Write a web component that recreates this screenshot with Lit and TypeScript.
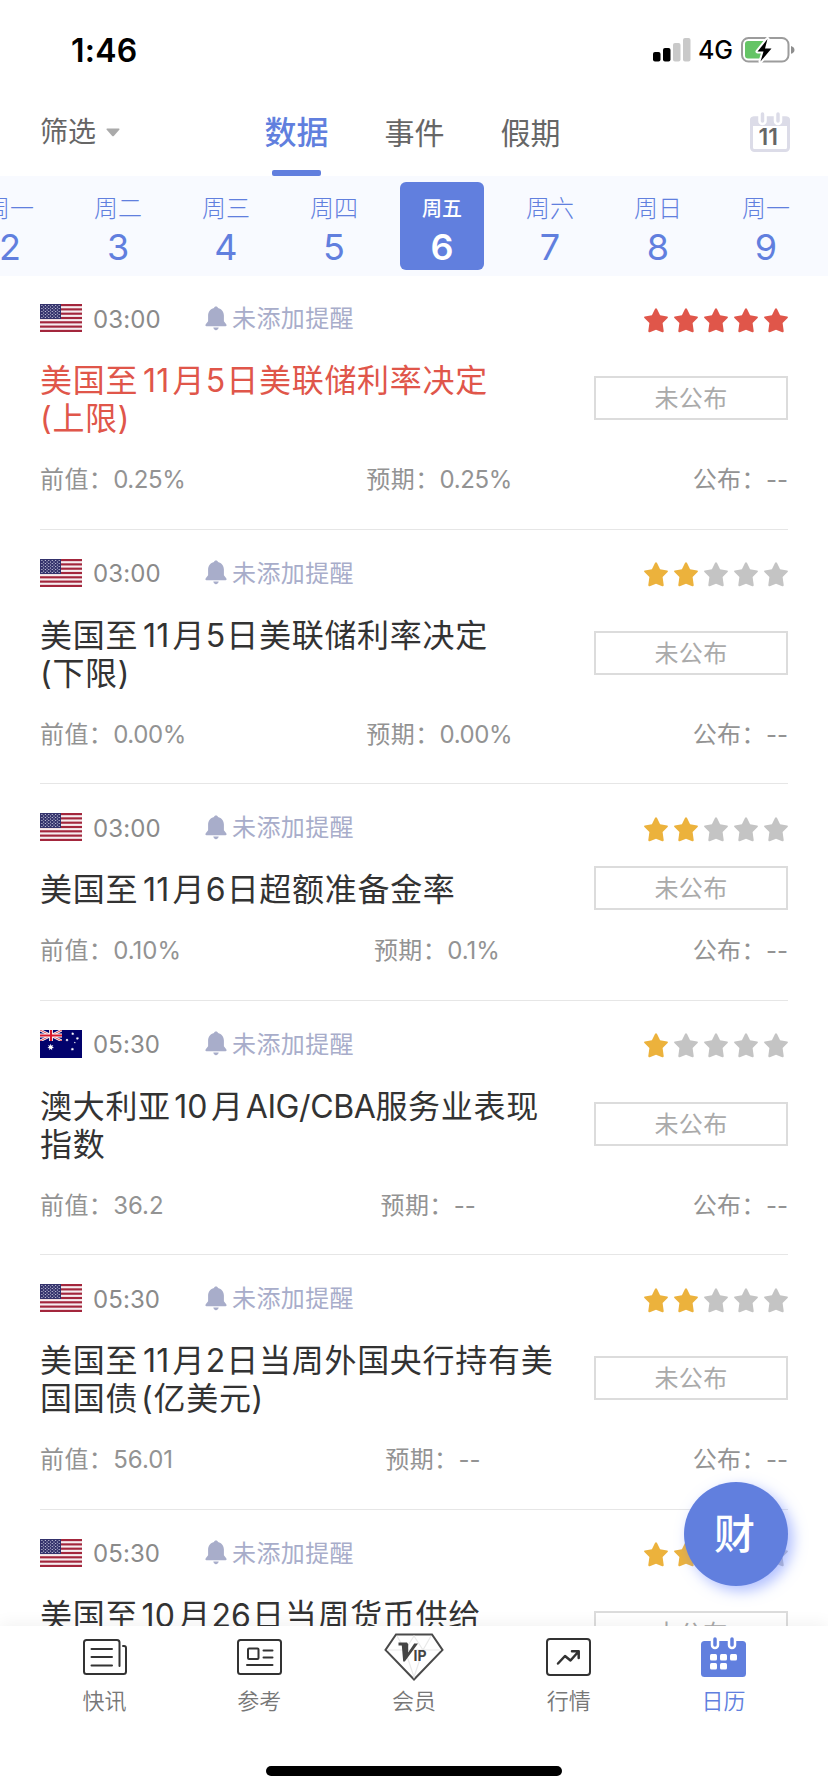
import { LitElement, html, css, svg } from "lit";
import { customElement, property } from "lit/decorators.js";
import { classMap } from "lit/directives/class-map.js";

interface CalendarEvent {
  country: "us" | "au";
  time: string;
  level: number;
  lines: string[];
  tall?: boolean;
  previous: string;
  forecast: string;
  actual: string;
}

const EVENTS: CalendarEvent[] = [
  { country: "us", time: "03:00", level: 5, lines: ["美国至11月5日美联储利率决定", "(上限)"], previous: "0.25%", forecast: "0.25%", actual: "--" },
  { country: "us", time: "03:00", level: 2, lines: ["美国至11月5日美联储利率决定", "(下限)"], previous: "0.00%", forecast: "0.00%", actual: "--" },
  { country: "us", time: "03:00", level: 2, lines: ["美国至11月6日超额准备金率"], previous: "0.10%", forecast: "0.1%", actual: "--" },
  { country: "au", time: "05:30", level: 1, lines: ["澳大利亚10月AIG/CBA服务业表现", "指数"], previous: "36.2", forecast: "--", actual: "--" },
  { country: "us", time: "05:30", level: 2, lines: ["美国至11月2日当周外国央行持有美", "国国债(亿美元)"], previous: "56.01", forecast: "--", actual: "--" },
  { country: "us", time: "05:30", level: 2, lines: ["美国至10月26日当周货币供给"], tall: true, previous: "--", forecast: "--", actual: "--" },
];

const DAYS: [string, string][] = [
  ["周一", "2"], ["周二", "3"], ["周三", "4"], ["周四", "5"],
  ["周五", "6"], ["周六", "7"], ["周日", "8"], ["周一", "9"],
];

const usFlag = html`<svg width="42" height="28" viewBox="0 0 42 28">
  <rect width="42" height="28" fill="#f6eef0" />
  ${[0, 1, 2, 3, 4, 5, 6].map((i) => svg`<rect y=${i * 4.308} width="42" height="2.154" fill="#a3263c" />`)}
  <rect width="21" height="15" fill="#34336c" />
  ${[0, 1, 2, 3, 4, 5, 6, 7, 8].flatMap((r) =>
    [0, 1, 2, 3, 4, 5].slice(0, r % 2 ? 5 : 6).map(
      (c) => svg`<circle cx=${1.9 + c * 3.45 + (r % 2 ? 1.72 : 0)} cy=${1.5 + r * 1.5} r="0.6" fill="#e6e6f4" />`,
    ),
  )}
</svg>`;

const auStar = (x: number, y: number, r: number) => {
  const pts: string[] = [];
  for (let i = 0; i < 14; i++) {
    const a = (Math.PI * i) / 7 - Math.PI / 2;
    const q = i % 2 ? r * 0.48 : r;
    pts.push(`${(x + q * Math.cos(a)).toFixed(2)},${(y + q * Math.sin(a)).toFixed(2)}`);
  }
  return svg`<polygon points=${pts.join(" ")} fill="#fff" />`;
};

const auFlag = html`<svg width="42" height="28" viewBox="0 0 42 28">
  <rect width="42" height="28" fill="#02026c" />
  <svg width="22" height="11" viewBox="0 0 22 11">
    <path d="M0 0L22 11M22 0L0 11" stroke="#fff" stroke-width="2.6" />
    <path d="M0 0L22 11M22 0L0 11" stroke="#d22a3c" stroke-width="0.9" />
    <path d="M11 0V11M0 5.5H22" stroke="#fff" stroke-width="3.8" />
    <path d="M11 0V11M0 5.5H22" stroke="#d8182c" stroke-width="2.1" />
  </svg>
  ${auStar(10.7, 17.2, 3.4)}${auStar(32.7, 3.8, 1.7)}${auStar(27, 10, 1.6)}
  ${auStar(37.4, 8.4, 1.7)}${auStar(32.4, 19.2, 1.8)}${auStar(34.8, 12.6, 1)}
</svg>`;

const bell = html`<svg width="22" height="25" viewBox="0 0 22 25">
  <path fill="#a8adca" d="M11 0.4c1.1 0 1.9.7 2 1.7 3.6.9 5.9 3.8 5.9 7.5v5.6l2.300 3.100c.8 1.100.4 1.900-.7 1.900H1.500c-1.100 0-1.500-.8-.7-1.900l2.300-3.100V9.600C3.100 5.900 5.400 3 9 2.100 9.100 1.100 9.900.4 11 .4z" />
  <path fill="#a8adca" d="M8.300 21.600h5.400c-.2 1.500-1.300 2.600-2.700 2.600s-2.500-1.100-2.700-2.600z" />
</svg>`;

@customElement("star-rating")
export class StarRating extends LitElement {
  @property({ type: Number }) level = 0;

  static styles = css`
    :host { display: flex; gap: 6px; }
    svg { display: block; fill: #c4c4c4; }
    .gold { fill: #ecb23c; }
    .red { fill: #e0564a; }
  `;

  render() {
    return [1, 2, 3, 4, 5].map(
      (n) => html`<svg class=${classMap({ red: this.level === 5, gold: this.level < 5 && n <= this.level })} width="24" height="25" viewBox="0 0 24 25">
        <path d="M11.100.8q.9-1.300 1.800 0l3.200 6.400 7 1.200q1.400.4.500 1.500l-5 5.100 1.100 8q0 1.700-1.500 1.200L12 21.800l-6.200 2.400q-1.500.5-1.500-1.200l1.100-8-5-5.100q-.9-1.100.5-1.500l7-1.200z" />
      </svg>`,
    );
  }
}

@customElement("event-row")
export class EventRow extends LitElement {
  @property({ attribute: false }) event!: CalendarEvent;

  static styles = css`
    :host {
      display: block;
      box-sizing: border-box;
      padding-top: 29px;
      border-bottom: 1px solid #e6e6e6;
    }
    svg { display: block; }
    .top { display: flex; align-items: center; height: 28px; }
    .time { width: 112px; margin-left: 11px; font-size: 24px; line-height: 28px; font-weight: 420; letter-spacing: 0.1px; color: #8a8a8a; padding-top: 3px; }
    .bell { margin-right: 5px; }
    .remind { flex: 1; font-size: 24px; line-height: 28px; letter-spacing: 0.4px; color: #a8adca; padding-top: 2px; }
    .stars { margin-top: 4px; }
    .main { display: flex; align-items: center; justify-content: space-between; margin-top: 28px; }
    .title { margin: 2px 0 -2px; font-size: 32px; line-height: 38px; letter-spacing: 0.7px; color: #333; white-space: nowrap; }
    .title.hot { color: #e0564a; }
    .title.tall { min-height: 76px; }
    .latin { margin: 0 1.200px 0 0.500px; letter-spacing: 0; }
    .latin.word { margin: 0 0 0 2px; letter-spacing: -0.4px; }
    .latin.ten { margin: 0 3.500px; }
    .latin.ones { margin: 0 3.300px 0 5px; }
    .paren { margin-left: 3px; }
    .status {
      box-sizing: border-box;
      width: 194px;
      height: 44px;
      margin: -3px 0;
      border: 2px solid #dcdcdc;
      font-size: 24px;
      line-height: 41px;
      letter-spacing: 0.4px;
      text-align: center;
      color: #aaa;
    }
    .values { display: flex; justify-content: space-between; padding: 28px 0 32px; font-size: 24px; line-height: 32.500px; color: #939393; }
    .label { letter-spacing: 0.4px; }
    .percent { letter-spacing: -0.4px; }
  `;

  private line(text: string) {
    const runs = text.match(/[A-Za-z0-9\/]+|\(|[^A-Za-z0-9\/(]+/g) ?? [];
    return html`<div>${runs.map((r, i) => {
      if (r === "(" && i > 0) return html`<span class="paren">${r}</span>`;
      if (!/^[A-Za-z0-9]/.test(r)) return r;
      return html`<span class=${classMap({ latin: true, word: /[A-Z]/.test(r), ten: r === "10", ones: r === "11" })}>${r}</span>`;
    })}</div>`;
  }

  private value(label: string, v: string) {
    const percent = /^0\.[^1]+%$/.test(v);
    return html`<span><span class="label">${label}：</span><span class=${classMap({ percent })}>${v}</span></span>`;
  }

  render() {
    const e = this.event;
    return html`
      <div class="top">
        ${e.country === "us" ? usFlag : auFlag}
        <span class="time">${e.time}</span>
        <span class="bell">${bell}</span>
        <span class="remind">未添加提醒</span>
        <star-rating class="stars" .level=${e.level}></star-rating>
      </div>
      <div class="main">
        <div class=${classMap({ title: true, hot: e.level === 5, tall: !!e.tall })}>${e.lines.map((l) => this.line(l))}</div>
        <div class="status">未公布</div>
      </div>
      <div class="values">
        ${this.value("前值", e.previous)}${this.value("预期", e.forecast)}${this.value("公布", e.actual)}
      </div>
    `;
  }
}

@customElement("status-bar")
export class StatusBar extends LitElement {
  static styles = css`
    :host { display: flex; align-items: center; box-sizing: border-box; height: 88px; padding: 12px 33px 0 71px; color: #000; }
    svg { display: block; }
    .clock { flex: 1; font-size: 32px; font-weight: 600; line-height: 40px; letter-spacing: 0.2px; padding-top: 1px; }
    .net { margin: 0 8px 0 7px; font-size: 25px; font-weight: 500; line-height: 40px; }
  `;
  render() {
    return html`
      <span class="clock">1:46</span>
      <svg width="38" height="24" viewBox="0 0 38 24">
        <rect x="0" y="14" width="7.500" height="9.500" rx="2" />
        <rect x="10" y="10" width="7.500" height="13.500" rx="2" />
        <rect x="20" y="5" width="7.500" height="18.500" rx="2" fill="#c9c9c9" />
        <rect x="30" y="0" width="7.500" height="23.500" rx="2" fill="#c9c9c9" />
      </svg>
      <span class="net">4G</span>
      <svg width="54" height="28" viewBox="0 0 54 28">
        <rect x="1" y="2" width="46.500" height="23.500" rx="6.500" fill="none" stroke="#9c9c9c" stroke-width="2" />
        <path d="M50 10q3.500 1.300 3.500 3.900T50 17.800z" fill="#8e8e8e" />
        <path d="M7 5H24V22.500H7Q4 22.500 4 19.500V8Q4 5 7 5z" fill="#65c466" />
        <path d="M26.500 3L16.500 15.500h6L19.500 25.500 30.500 12.500h-6.500z" fill="#000" stroke="#fff" stroke-width="4" paint-order="stroke" stroke-linejoin="round" />
      </svg>
    `;
  }
}

@customElement("tab-bar")
export class TabBar extends LitElement {
  static styles = css`
    :host { display: block; box-sizing: border-box; height: 166px; background: #fff; box-shadow: 0 -2px 16px rgba(0, 0, 0, 0.06); }
    svg { display: block; overflow: visible; }
    .items { display: grid; grid-template-columns: repeat(5, 154.750px); justify-content: center; height: 140px; }
    .item { display: flex; flex-direction: column; align-items: center; color: #777; font-size: 22px; font-weight: 350; line-height: 30px; }
    .item.active { color: #617fde; }
    .icon { display: flex; align-items: center; height: 50px; padding-top: 6px; margin-bottom: 4px; }
    .home { width: 296px; height: 10px; margin: 0 auto; border-radius: 5px; background: #000; }
    .ip { font-family: Inter, sans-serif; font-weight: 700; }
  `;

  private item(icon: unknown, label: string, active = false) {
    return html`<div class=${classMap({ item: true, active })}><div class="icon">${icon}</div>${label}</div>`;
  }

  render() {
    const news = html`<svg width="44" height="36" viewBox="0 0 44 36" fill="none" stroke="#333" stroke-width="2" stroke-linecap="round">
      <path d="M36.500 27V3.500Q36.500 1 34 1H3.500Q1 1 1 3.500V32.500Q1 35 3.500 35H40.500Q43 35 43 32.500V9Q43 7 41 7H40" />
      <path d="M8.500 10H29M8.500 18H29M8.500 26.500H29" />
    </svg>`;
    const reference = html`<svg width="45" height="36" viewBox="0 0 45 36" fill="none" stroke="#333" stroke-width="2" stroke-linecap="round">
      <rect x="1" y="1" width="43" height="34" rx="2.500" />
      <rect x="11" y="9.500" width="10.500" height="10.500" rx="1" />
      <path d="M26.500 11.500H35.500M26.500 18.500H35.500M10 26H35.500" />
    </svg>`;
    const vip = html`<svg width="60" height="48" viewBox="0 0 60 48">
      <path d="M12 1.500H48L58.500 17 30 46.500 1.500 17z" fill="#fff" stroke="#4a4a4a" stroke-width="2" />
      <path d="M3 17H57M13 3L21 17 30 44 39 17 47 3M21 17L30 3 39 17" fill="none" stroke="#e9e9e9" stroke-width="1.200" />
      <path d="M14.500 9.500h8.500l1.200 1.800v8.200l6-9h3.800L20.800 28.500h-1.600l-1.400-16h-3.300z" fill="#444" />
      <text class="ip" x="29.500" y="28" font-size="14" fill="#444">IP</text>
    </svg>`;
    const market = html`<svg width="45" height="38" viewBox="0 0 45 38" fill="none" stroke="#333" stroke-width="2" stroke-linecap="round" stroke-linejoin="round">
      <rect x="1" y="1" width="43" height="36" rx="3" />
      <path stroke-width="2.500" d="M12 25.500L19 18 24.500 22.500 32.500 13.500M26 13.300H32.700V20" />
    </svg>`;
    const calendar = html`<svg width="45" height="40" viewBox="0 0 45 40">
      <rect y="4" width="45" height="36" rx="3.500" fill="#617fde" />
      <g fill="#617fde" stroke="#fff" stroke-width="2.500">
        <rect x="11" y="-1" width="6" height="12" rx="3" />
        <rect x="28" y="-1" width="6" height="12" rx="3" />
      </g>
      <g fill="#fff">
        <rect x="9" y="17" width="7" height="6.500" rx="1.500" /><rect x="19" y="17" width="7" height="6.500" rx="1.500" /><rect x="29" y="17" width="7" height="6.500" rx="1.500" />
        <rect x="9" y="26" width="7" height="6.500" rx="1.500" /><rect x="19" y="26" width="7" height="6.500" rx="1.500" />
      </g>
    </svg>`;
    return html`
      <div class="items">
        ${this.item(news, "快讯")}${this.item(reference, "参考")}${this.item(vip, "会员")}${this.item(market, "行情")}${this.item(calendar, "日历", true)}
      </div>
      <div class="home"></div>
    `;
  }
}

@customElement("app-root")
export class AppRoot extends LitElement {
  static styles = css`
    :host {
      display: flex;
      flex-direction: column;
      position: relative;
      width: 828px;
      height: 1792px;
      overflow: hidden;
      background: #fff;
      font-family: Inter, "Noto Sans CJK SC", sans-serif;
      font-weight: 400;
    }
    svg { display: block; }
    .head { display: grid; grid-template-columns: 225px 1fr 78px; height: 88px; color: #666; }
    .filter { display: flex; align-items: center; gap: 10px; padding: 0 0 0 40px; font-size: 28px; line-height: 90px; height: 88px; }
    .tabs { display: flex; justify-content: center; gap: 56px; width: 375px; height: 88px; font-size: 30px; line-height: 90px; }
    .tab { position: relative; }
    .tab.on { color: #617fde; font-size: 32px; font-weight: 500; }
    .tab.on::after { content: ""; position: absolute; left: 8px; right: 8px; bottom: 0; height: 6px; border-radius: 2px; background: #617fde; }
    .tab.on { height: 88px; }
    .today { display: flex; align-items: center; }
    .strip { display: flex; flex: none; height: 100px; box-sizing: border-box; padding-top: 6px; margin-left: -44px; background: #f8faff; overflow: hidden; }
    .cell { display: flex; flex: none; width: 108px; justify-content: center; color: #617fde; }
    .day { display: flex; flex-direction: column; align-items: center; box-sizing: border-box; width: 84px; height: 88px; border-radius: 6px; padding-top: 11px; }
    .day.on { background: #617fde; color: #fff; }
    .week { font-size: 24px; font-weight: 300; line-height: 32px; }
    .num { font-size: 36px; line-height: 45px; }
    .on .week { font-size: 20px; font-weight: 500; }
    .on .num { font-weight: 600; }
    .list { flex: 1; min-height: 0; overflow: hidden; margin-top: -1px; padding: 0 40px; }
    .bar { position: relative; flex: none; }
    .fab {
      position: absolute;
      left: 684px;
      top: 1482px;
      width: 104px;
      height: 104px;
      border-radius: 50%;
      background: #617fde;
      color: #fff;
      font-size: 41px;
      font-weight: 500;
      line-height: 104px;
      text-align: center;
      text-indent: -3px;
      box-shadow: 5px 5px 14px rgba(97, 127, 255, 0.5);
    }
  `;

  render() {
    return html`
      <status-bar></status-bar>
      <div class="head">
        <div class="filter">筛选<svg width="14" height="9" viewBox="0 0 14 9"><path d="M1 .5H13Q14 .8 13.300 1.800L8 7.800Q7 8.800 6 7.800L.700 1.800Q0 .8 1 .5z" fill="#aaa" /></svg></div>
        <div class="tabs"><span class="tab on">数据</span><span class="tab">事件</span><span class="tab">假期</span></div>
        <div class="today">
          <svg width="40" height="40" viewBox="0 0 40 40">
            <rect x="1.500" y="6" width="37" height="32.500" rx="3" fill="#fff" stroke="#dcdce8" stroke-width="3" />
            <path d="M0 14V8Q0 4.500 3.500 4.500H36.500Q40 4.500 40 8V14z" fill="#dcdce8" />
            <g fill="#dcdce8" stroke="#fff" stroke-width="2.500">
              <rect x="9.500" y="-1" width="6" height="13" rx="3" /><rect x="25" y="-1" width="6" height="13" rx="3" />
            </g>
            <text x="18.300" y="32.500" text-anchor="middle" font-size="23" font-weight="600" fill="#666">11</text>
          </svg>
        </div>
      </div>
      <div class="strip">
        ${DAYS.map(([w, n]) => html`<div class="cell"><div class=${classMap({ day: true, on: n === "6" })}><span class="week">${w}</span><span class="num">${n}</span></div></div>`)}
      </div>
      <div class="list">${EVENTS.map((e) => html`<event-row .event=${e}></event-row>`)}</div>
      <div class="fab">财</div>
      <tab-bar class="bar"></tab-bar>
    `;
  }
}
